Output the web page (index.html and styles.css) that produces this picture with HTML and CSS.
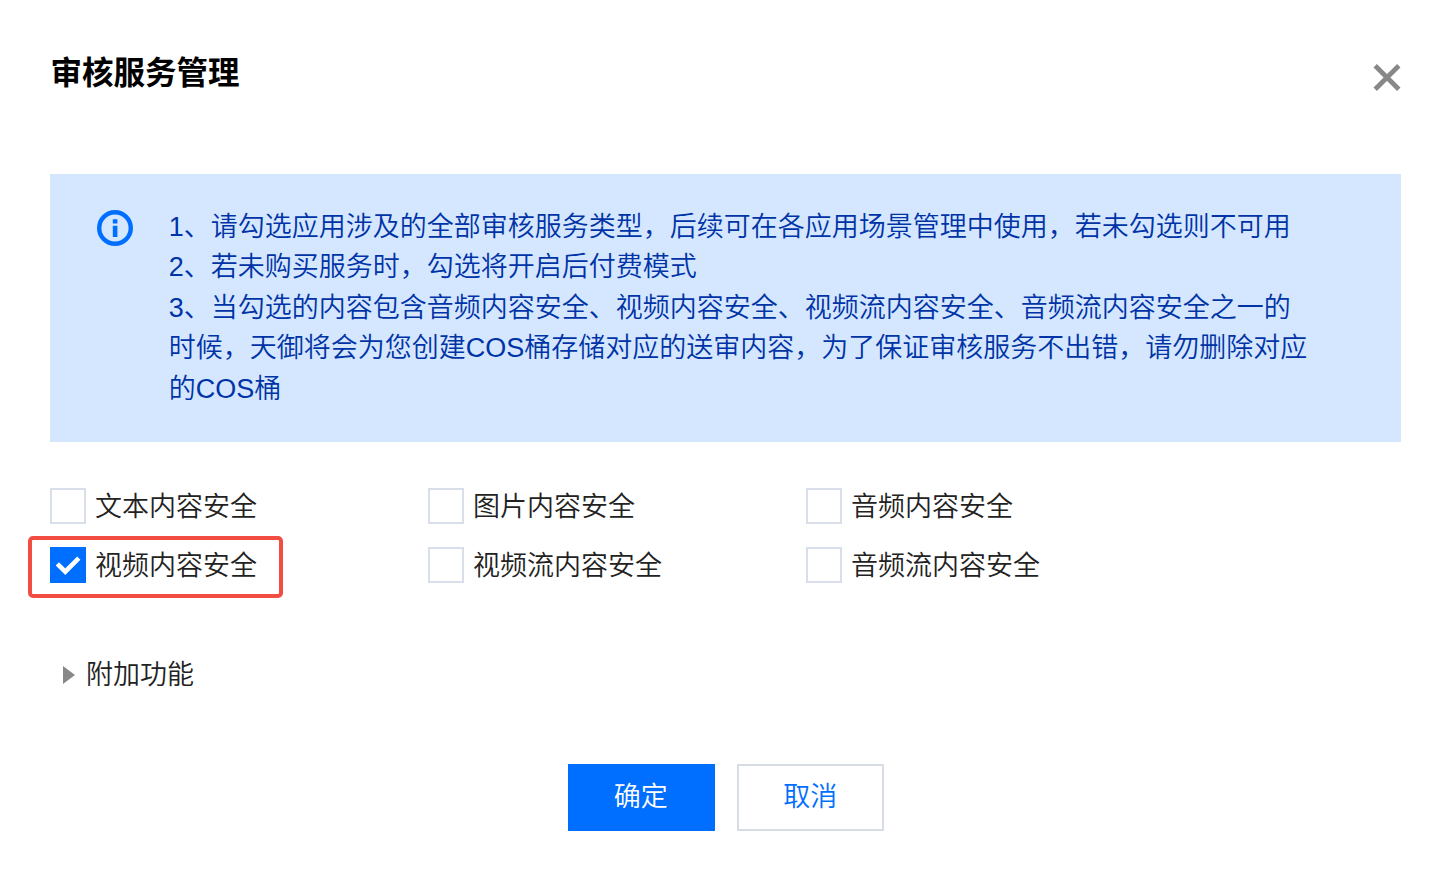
FILE: index.html
```html
<!DOCTYPE html>
<html lang="zh-CN">
<head>
    <meta charset="UTF-8">
    <meta name="viewport" content="width=device-width, initial-scale=1.0">
    <title>审核服务管理</title>
    <link rel="stylesheet" href="styles.css">
</head>
<body>
    <div class="dialog">
        <div class="dialog-header">
            <h3 class="title">审核服务管理</h3>
            <button class="close" aria-label="关闭">
                <svg width="28" height="28" viewBox="0 0 28 28">
                    <path d="M2.2 2.7L25.8 26.3M25.8 2.7L2.2 26.3" stroke="#888" stroke-width="4.8" fill="none"/>
                </svg>
            </button>
        </div>

        <div class="alert">
            <svg class="alert-icon" width="36" height="36" viewBox="0 0 36 36">
                <circle cx="18" cy="18" r="15.8" fill="none" stroke="#006eff" stroke-width="4.4"/>
                <path d="M15.8 9.2h4.6v4.4h-4.6zM15.8 15.8h4.6v11.2h-4.6z" fill="#006eff"/>
            </svg>
            <div class="alert-text">
                <p>1、请勾选应用涉及的全部审核服务类型，后续可在各应用场景管理中使用，若未勾选则不可用</p>
                <p>2、若未购买服务时，勾选将开启后付费模式</p>
                <p>3、当勾选的内容包含音频内容安全、视频内容安全、视频流内容安全、音频流内容安全之一的时候，天御将会为您创建COS桶存储对应的送审内容，为了保证审核服务不出错，请勿删除对应的COS桶</p>
            </div>
        </div>

        <div class="services">
            <label class="service"><span class="box"></span><span class="name">文本内容安全</span></label>
            <label class="service"><span class="box"></span><span class="name">图片内容安全</span></label>
            <label class="service"><span class="box"></span><span class="name">音频内容安全</span></label>
            <label class="service marked">
                <span class="box checked">
                    <svg width="36" height="36" viewBox="0 0 36 36">
                        <path d="M7.3 16.8L15.3 24.7L28.8 11.2" fill="none" stroke="#fff" stroke-width="4.6"/>
                    </svg>
                </span>
                <span class="name">视频内容安全</span>
            </label>
            <label class="service"><span class="box"></span><span class="name">视频流内容安全</span></label>
            <label class="service"><span class="box"></span><span class="name">音频流内容安全</span></label>
        </div>

        <div class="extra"><span class="arrow"></span><span class="name">附加功能</span></div>

        <div class="actions">
            <button class="btn primary">确定</button>
            <button class="btn">取消</button>
        </div>
    </div>
</body>
</html>
```

FILE: styles.css
```css
*, *::after {
    box-sizing: border-box;
}
body {
    margin: 0;
    background-color: #fff;
    color: #222;
    font-family: "Liberation Sans", "Noto Sans CJK SC", sans-serif;
    font-size: 27px;
    font-weight: 350;
    line-height: 40.5px;
}
.dialog {
    padding: 50px 45.5px 0 50.4px;
}
.dialog-header {
    display: flex;
    justify-content: space-between;
    height: 124px;
}
.title {
    margin: 0;
    color: #000;
    font-size: 31.5px;
    font-weight: bold;
    line-height: 47px;
}
.close {
    display: flex;
    align-self: flex-start;
    margin-top: 13px;
    padding: 0;
    border: none;
    background: none;
    cursor: pointer;
}
.alert {
    display: flex;
    gap: 36px;
    height: 268px;
    padding: 32.5px 84px 0 46.3px;
    background-color: #d5e7ff;
    color: #0034a6;
}
.alert-icon {
    flex: none;
    margin-top: 3px;
}
.alert-text p {
    margin: 0;
}
.services {
    display: grid;
    grid-template-columns: repeat(3, 378px);
    row-gap: 18px;
    margin-top: 43px;
}
.service {
    display: flex;
    align-items: center;
    gap: 8.5px;
    height: 41px;
    position: relative;
}
.name {
    padding-top: 3.5px;
}
.box {
    width: 36px;
    height: 36px;
    border: 2px solid #d8dfea;
}
.box.checked {
    border: none;
    background-color: #006eff;
}
.box svg {
    display: block;
}
.marked::after {
    content: "";
    position: absolute;
    left: -22.5px;
    top: -8px;
    width: 255px;
    height: 62px;
    border: 4px solid #f24d42;
    border-radius: 5px;
}
.extra {
    display: flex;
    align-items: center;
    gap: 10.5px;
    height: 41px;
    margin-top: 69px;
    padding-left: 13px;
}
.extra .name {
    padding-top: 2px;
}
.arrow {
    border-left: 12px solid #888;
    border-top: 9.5px solid transparent;
    border-bottom: 9.5px solid transparent;
}
.actions {
    display: flex;
    justify-content: center;
    gap: 22.5px;
    margin-top: 68.5px;
    padding-left: 1px;
}
.btn {
    width: 147px;
    height: 67.5px;
    padding: 0 1px 0 0;
    border: 2px solid #d8dde5;
    background-color: #fff;
    color: #006eff;
    font: inherit;
    cursor: pointer;
}
.btn.primary {
    border-color: #006eff;
    background-color: #006eff;
    color: #fff;
}
```
